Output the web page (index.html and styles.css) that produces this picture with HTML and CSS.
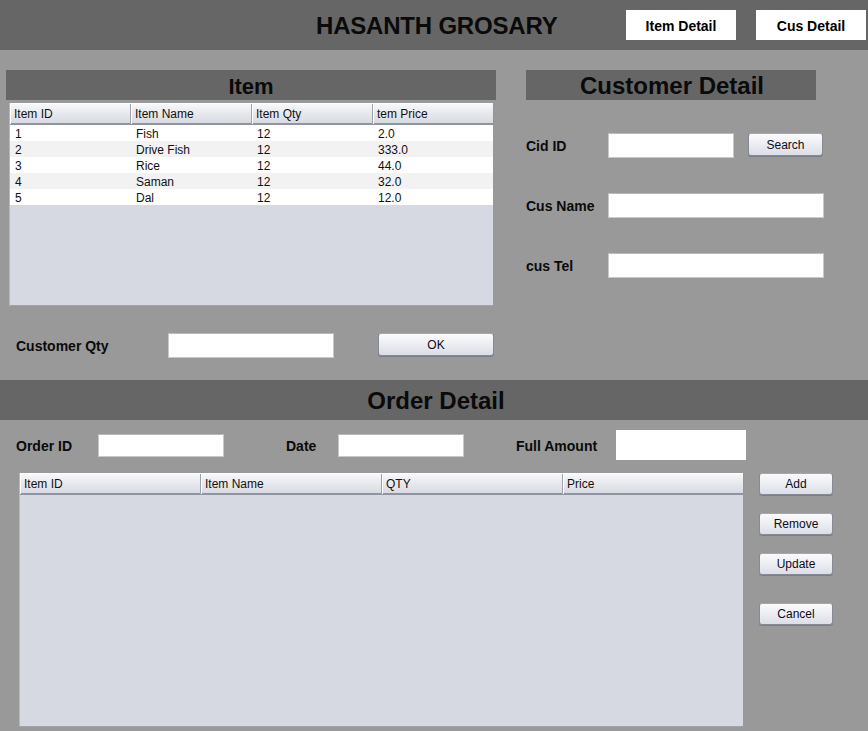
FILE: index.html
```html
<!DOCTYPE html>
<html>
<head>
<meta charset="utf-8">
<title>HASANTH GROSARY</title>
<link rel="stylesheet" href="styles.css">
</head>
<body>
<header class="topbar">
  <h1 class="app-title">HASANTH GROSARY</h1>
  <nav class="nav">
    <div class="nav-btn">Item Detail</div>
    <div class="nav-btn">Cus Detail</div>
  </nav>
</header>

<section class="upper">
  <div class="item-col">
    <div class="bar bar-item">Item</div>
    <div class="grid-table item-table">
      <div class="thead cols4a">
        <div class="th">Item ID</div>
        <div class="th">Item Name</div>
        <div class="th">Item Qty</div>
        <div class="th">tem Price</div>
      </div>
      <div class="tr cols4a"><div class="td">1</div><div class="td">Fish</div><div class="td">12</div><div class="td">2.0</div></div>
      <div class="tr alt cols4a"><div class="td">2</div><div class="td">Drive Fish</div><div class="td">12</div><div class="td">333.0</div></div>
      <div class="tr cols4a"><div class="td">3</div><div class="td">Rice</div><div class="td">12</div><div class="td">44.0</div></div>
      <div class="tr alt cols4a"><div class="td">4</div><div class="td">Saman</div><div class="td">12</div><div class="td">32.0</div></div>
      <div class="tr cols4a"><div class="td">5</div><div class="td">Dal</div><div class="td">12</div><div class="td">12.0</div></div>
    </div>
    <div class="qty-row">
      <label class="lbl lbl-qty">Customer Qty</label>
      <div class="field field-qty"></div>
      <div class="btn btn-ok">OK</div>
    </div>
  </div>

  <div class="cus-col">
    <div class="bar bar-cus">Customer Detail</div>
    <div class="form-row first">
      <label class="lbl lbl-cus">Cid ID</label>
      <div class="field field-cid"></div>
      <div class="btn btn-search">Search</div>
    </div>
    <div class="form-row">
      <label class="lbl lbl-cus">Cus Name</label>
      <div class="field field-wide"></div>
    </div>
    <div class="form-row">
      <label class="lbl lbl-cus">cus Tel</label>
      <div class="field field-wide"></div>
    </div>
  </div>
</section>

<div class="order-band">Order Detail</div>

<section class="order">
  <div class="order-row">
    <label class="lbl lbl-oid">Order ID</label>
    <div class="field field-oid"></div>
    <label class="lbl lbl-date">Date</label>
    <div class="field field-date"></div>
    <label class="lbl lbl-full">Full Amount</label>
    <div class="amount-box"></div>
  </div>
  <div class="order-main">
    <div class="grid-table order-table">
      <div class="thead cols4b">
        <div class="th">Item ID</div>
        <div class="th">Item Name</div>
        <div class="th">QTY</div>
        <div class="th">Price</div>
      </div>
    </div>
    <div class="side-btns">
      <div class="btn btn-side">Add</div>
      <div class="btn btn-side">Remove</div>
      <div class="btn btn-side">Update</div>
      <div class="btn btn-side btn-cancel">Cancel</div>
    </div>
  </div>
</section>
</body>
</html>
```

FILE: styles.css
```css
* { box-sizing: border-box; }
html, body {
  margin: 0;
  padding: 0;
  width: 868px;
  height: 731px;
  overflow: hidden;
  background: #999999;
  font-family: "Liberation Sans", Arial, sans-serif;
  color: #111;
}

.topbar {
  height: 50px;
  background: #666666;
  display: flex;
  align-items: center;
  padding-left: 316px;
}
.app-title {
  margin: 0;
  font-size: 24px;
  font-weight: bold;
  color: #0a0a0a;
  line-height: 1;
  width: 310px;
  padding-top: 2px;
  letter-spacing: -0.2px;
}
.nav {
  display: flex;
  gap: 20px;
  align-self: flex-start;
  margin-top: 10px;
}
.nav-btn {
  width: 110px;
  height: 30px;
  background: #fff;
  font-size: 14px;
  font-weight: bold;
  color: #000;
  display: flex;
  align-items: center;
  justify-content: center;
  padding-top: 2px;
}

.upper {
  height: 330px;
  display: flex;
  padding-top: 20px;
}
.item-col {
  width: 490px;
  margin-left: 6px;
}
.cus-col {
  width: 298px;
  margin-left: 30px;
}

.bar {
  height: 30px;
  background: #666666;
  font-weight: bold;
  color: #0a0a0a;
  display: flex;
  align-items: center;
  justify-content: center;
  line-height: 1;
}
.bar-item { font-size: 22px; padding-top: 3px; }
.bar-cus { font-size: 24px; width: 290px; padding-top: 2px; padding-left: 2px; }

.grid-table {
  background: #d6d9e1;
  border-left: 1px solid #b5b8c0;
  border-bottom: 1px solid #9fa3ad;
}
.item-table {
  margin: 3px 0 0 3px;
  width: 484px;
  height: 203px;
}
.cols4a { display: grid; grid-template-columns: 121px 121px 121px 121px; }
.cols4b { display: grid; grid-template-columns: 181px 181px 181px 181px; }

.thead {
  height: 22px;
  background: linear-gradient(#f7f8fa, #e6e7ec 55%, #d9dbe2);
  border-top: 1px solid #fdfdfe;
  border-bottom: 2px solid #8e94a2;
}
.th {
  font-size: 12px;
  color: #111;
  padding-left: 4px;
  padding-top: 1px;
  line-height: 19px;
  border-right: 1px solid #9ea2ad;
  box-shadow: inset 1px 0 0 #ffffff;
}
.th:last-child { border-right: 1px solid #8e94a2; }

.tr {
  height: 16px;
  background: #ffffff;
}
.tr.alt { background: #f2f2f2; }
.td {
  font-size: 12px;
  color: #111;
  padding-left: 5px;
  padding-top: 1px;
  line-height: 16px;
}

.lbl {
  font-size: 14px;
  font-weight: bold;
  color: #0a0a0a;
}
.field {
  height: 25px;
  background: #fff;
  border: 1px solid #c9c9c9;
  border-top-color: #b9b9b9;
}

.qty-row {
  display: flex;
  align-items: center;
  margin-top: 27px;
  height: 25px;
}
.lbl-qty { margin-left: 10px; width: 152px; padding-top: 1px; }
.field-qty { width: 166px; }
.btn-ok { width: 116px; margin-left: 44px; margin-top: -2px; }

.btn {
  height: 23px;
  border: 1px solid #858a96;
  border-top-color: #a3a7b0;
  border-radius: 3px;
  background: linear-gradient(#fbfbfd, #eeeff3 45%, #dcdee6);
  box-shadow: 0 1px 0 #7a7e88;
  font-size: 12px;
  color: #0b0b20;
  display: flex;
  align-items: center;
  justify-content: center;
}

.form-row {
  display: flex;
  align-items: center;
  height: 25px;
  margin-top: 35px;
}
.form-row.first { margin-top: 33px; }
.lbl-cus { width: 82px; }
.field-cid { width: 126px; }
.btn-search { width: 75px; margin-left: 14px; margin-top: -2px; }
.field-wide { width: 216px; }

.order-band {
  height: 40px;
  background: #666666;
  font-size: 24px;
  font-weight: bold;
  color: #0a0a0a;
  display: flex;
  align-items: center;
  justify-content: center;
  padding-top: 2px;
  padding-left: 4px;
}

.order {
  padding-top: 10px;
}
.order-row {
  display: flex;
  align-items: center;
  height: 30px;
}
.order-row .field { height: 23px; width: 126px; }
.order-row .lbl { padding-top: 2px; }
.lbl-oid { margin-left: 16px; width: 82px; }
.lbl-date { margin-left: 62px; width: 52px; }
.lbl-full { margin-left: 52px; width: 100px; }
.amount-box {
  width: 130px;
  height: 30px;
  background: #fff;
}

.order-main {
  display: flex;
  margin-top: 13px;
}
.order-table {
  margin-left: 19px;
  width: 724px;
  height: 254px;
}
.side-btns {
  display: flex;
  flex-direction: column;
  margin-left: 16px;
  gap: 17px;
}
.btn-side { width: 74px; height: 22px; margin-bottom: 1px; }
.btn-cancel { margin-top: 10px; }
```
